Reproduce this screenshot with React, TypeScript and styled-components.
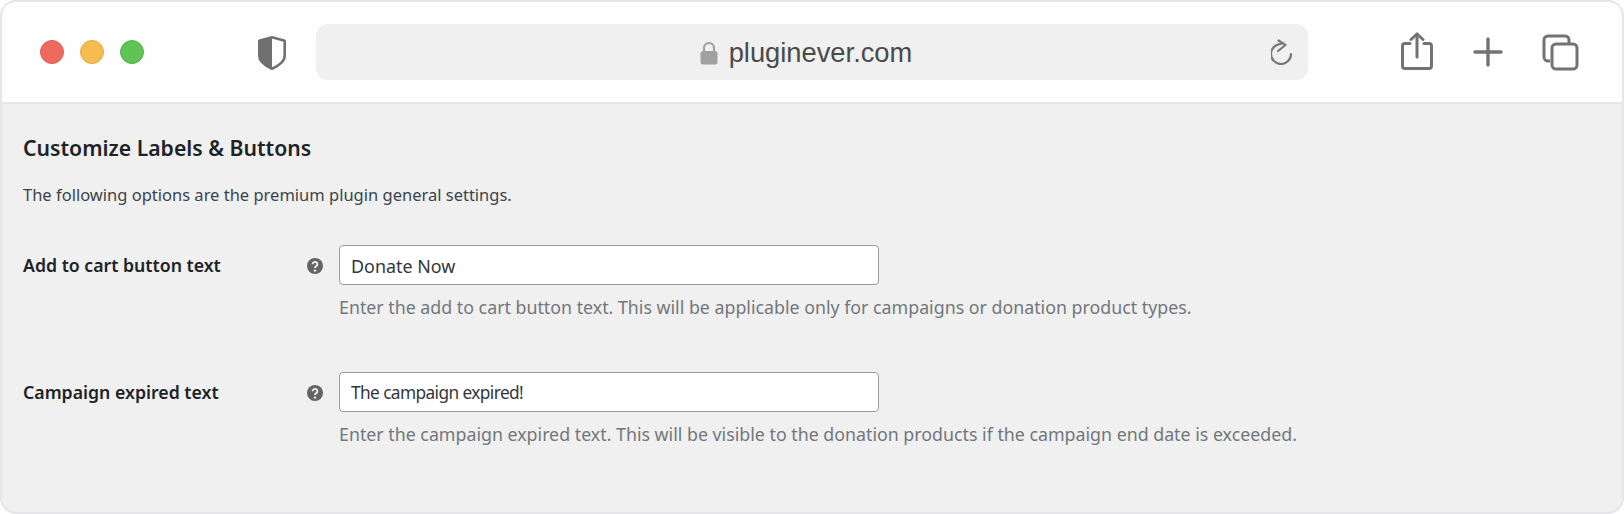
import styled, { createGlobalStyle } from "styled-components";

const GlobalStyle = createGlobalStyle`
  html, body {
    margin: 0;
    padding: 0;
    background: #fff;
  }
`;

const Browser = styled.div`
  box-sizing: border-box;
  width: 1624px;
  height: 514px;
  border: 2px solid #e6e6ea;
  border-radius: 16px;
  overflow: hidden;
  background: #f0f0f0;
  font-family: "Noto Sans", sans-serif;
`;

const Toolbar = styled.header`
  box-sizing: border-box;
  height: 102px;
  display: flex;
  align-items: center;
  padding: 0 0 0 38px;
  background: #fefefe;
  border-bottom: 2px solid #e6e6ea;
`;

const Dots = styled.div`
  display: flex;
  gap: 16px;
  margin-right: 114px;
`;

const Dot = styled.span<{ $fill: string; $edge: string }>`
  box-sizing: border-box;
  width: 24px;
  height: 24px;
  border-radius: 50%;
  background: ${(p) => p.$fill};
  border: 1px solid ${(p) => p.$edge};
`;

const Shield = styled.svg`
  display: block;
  margin-top: 2px;
`;

const UrlBar = styled.div`
  position: relative;
  box-sizing: border-box;
  width: 992px;
  height: 56px;
  margin-left: 30px;
  margin-right: 93px;
  padding: 2px 12px 0 0;
  border-radius: 12px;
  background: #f0f0f0;
  display: flex;
  align-items: center;
  justify-content: center;
  gap: 11px;
  font-family: "Liberation Sans", sans-serif;
  font-size: 27.3px;
  color: #4a4a4a;
`;

const Reload = styled.svg`
  position: absolute;
  right: 15px;
  top: 15px;
`;

const Actions = styled.div`
  display: flex;
  align-items: center;
  gap: 39px;
`;

const Content = styled.main`
  padding: 30px 21px 0;
`;

const Heading = styled.h2`
  margin: 0;
  font-size: 21.2px;
  line-height: 28px;
  font-weight: 600;
  color: #1d2327;
`;

const Intro = styled.p`
  margin: 23px 0 0;
  font-size: 16.5px;
  line-height: 20px;
  color: #3c434a;
`;

const Row = styled.section<{ $top: number }>`
  display: grid;
  grid-template-columns: 284px 1fr;
  margin-top: ${(p) => p.$top}px;
`;

const Label = styled.label`
  font-size: 17.7px;
  line-height: 22px;
  font-weight: 600;
  color: #1d2327;
  padding-top: 9px;
`;

const Field = styled.div`
  display: grid;
  grid-template-columns: 32px 540px;
  row-gap: 10px;
`;

const Help = styled.svg`
  margin-top: 13px;
`;

const TextBox = styled.div<{ $size: number; $spacing: number }>`
  box-sizing: border-box;
  height: 40px;
  padding: 1px 11px 0;
  display: flex;
  align-items: center;
  background: #fff;
  border: 1px solid #9a9a9f;
  border-radius: 4px;
  font-size: ${(p) => p.$size}px;
  letter-spacing: ${(p) => p.$spacing}px;
  color: #32373c;
`;

const Description = styled.p`
  grid-column: 2;
  margin: 0;
  white-space: nowrap;
  font-size: 17.8px;
  line-height: 24px;
  color: #72777c;
`;

const Icon = styled.svg`
  display: block;
`;

const HelpIcon = () => (
  <Help width="16" height="16" viewBox="0 0 16 16">
    <circle cx="8" cy="8" r="8" fill="#646464" />
    <path d="M5.6 6.2a2.4 2.3 0 1 1 3.7 1.9c-.9.6-1.3 1-1.3 1.9" fill="none" stroke="#f0f0f0" strokeWidth="1.9" />
    <circle cx="8" cy="12.6" r="1.2" fill="#f0f0f0" />
  </Help>
);

export default function App() {
  return (
    <>
      <GlobalStyle />
      <Browser>
        <Toolbar>
          <Dots>
            <Dot $fill="#f0695f" $edge="#dc5d55" />
            <Dot $fill="#f5bd4f" $edge="#e3a944" />
            <Dot $fill="#5fc453" $edge="#52b348" />
          </Dots>
          <Shield width="28" height="34" viewBox="0 0 28 34">
            <path d="M14 1.3 L26.7 4.8 V20 C26.7 26 20 30 14 32.7 C8 30 1.3 26 1.3 20 V4.8 Z" fill="none" stroke="#707070" strokeWidth="2.6" strokeLinejoin="round" />
            <path d="M14 1.3 L1.3 4.8 V20 C1.3 26 8 30 14 32.7 Z" fill="#707070" />
          </Shield>
          <UrlBar>
            <Icon width="18" height="24" viewBox="0 0 18 24">
              <path d="M4 11V7a5 5 0 0 1 10 0v4" fill="none" stroke="#a0a0a0" strokeWidth="2.2" />
              <rect x="0.5" y="10" width="17" height="13.5" rx="2.5" fill="#a0a0a0" />
            </Icon>
            pluginever.com
            <Reload width="22" height="26" viewBox="0 0 22 26" fill="none" stroke="#787878" strokeWidth="2.2" strokeLinecap="round" strokeLinejoin="round">
              <path d="M10 5a10 10 0 1 0 10 10" />
              <path d="M7.5 1.5 L14.5 6 L7 12" />
            </Reload>
          </UrlBar>
          <Actions>
            <Icon width="33" height="40" viewBox="0 0 33 40" fill="none" stroke="#737373" strokeWidth="3" strokeLinecap="round" strokeLinejoin="round">
              <path d="M9 11.5H4a2.5 2.5 0 0 0-2.5 2.5V34A2.5 2.5 0 0 0 4 36.5h24a2.5 2.5 0 0 0 2.5-2.5V14a2.5 2.5 0 0 0-2.5-2.5h-5" />
              <path d="M16 25V2" />
              <path d="M10 7.5 L16 2 L22 7.5" />
            </Icon>
            <Icon width="30" height="30" viewBox="0 0 30 30" fill="none" stroke="#737373" strokeWidth="3.4" strokeLinecap="round">
              <path d="M15 2V28" />
              <path d="M2 15H28" />
            </Icon>
            <Icon width="37" height="37" viewBox="0 0 37 37" fill="none" stroke="#737373" strokeWidth="3" strokeLinejoin="round">
              <path d="M8 27H6a4 4 0 0 1-4-4V6a4 4 0 0 1 4-4h17a4 4 0 0 1 4 4v3" />
              <rect x="10" y="10" width="25" height="25" rx="4" />
            </Icon>
          </Actions>
        </Toolbar>
        <Content>
          <Heading>Customize Labels &amp; Buttons</Heading>
          <Intro>The following options are the premium plugin general settings.</Intro>
          <Row $top={40}>
            <Label>Add to cart button text</Label>
            <Field>
              <HelpIcon />
              <TextBox $size={17.9} $spacing={0}>Donate Now</TextBox>
              <Description>Enter the add to cart button text. This will be applicable only for campaigns or donation product types.</Description>
            </Field>
          </Row>
          <Row $top={53}>
            <Label>Campaign expired text</Label>
            <Field>
              <HelpIcon />
              <TextBox $size={17.3} $spacing={-0.6}>The campaign expired!</TextBox>
              <Description>Enter the campaign expired text. This will be visible to the donation products if the campaign end date is exceeded.</Description>
            </Field>
          </Row>
        </Content>
      </Browser>
    </>
  );
}
